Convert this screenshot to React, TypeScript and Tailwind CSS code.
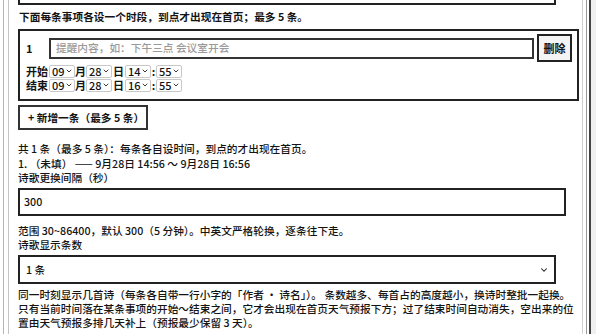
import React from "react";
import { ChevronDown } from "lucide-react";

const font = { fontFamily: '"Noto Sans CJK SC", "Noto Sans", sans-serif' };

const Sel = ({ v }: { v: string }) => (
  <span className="w-[26px] h-[13px] flex items-center justify-between border border-[#c8c8c8] rounded-[2px] pl-[2px] pr-[1px] text-[11px] leading-[11px] font-medium">
    {v}
    <ChevronDown size={8} strokeWidth={2.5} />
  </span>
);

const TimeRow = ({ label, h }: { label: string; h: string }) => (
  <div className="flex items-center h-[14px] leading-[11px]">
    <span className="w-[23px] font-bold">{label}</span>
    <Sel v="09" />
    <span className="w-[11px] text-center font-bold">月</span>
    <Sel v="28" />
    <span className="w-[13px] text-center font-bold">日</span>
    <Sel v={h} />
    <span className="w-[5px] text-center font-bold">:</span>
    <Sel v="55" />
  </div>
);

export default function App() {
  return (
    <div
      className="w-[596px] h-[334px] overflow-hidden bg-white text-[#141414] text-[10.7px] leading-[14px] flex"
      style={font}
    >
      {/* left frame lines */}
      <div className="w-[3px]" />
      <div className="w-[1px] bg-[#b5b5b5]" />
      <div className="w-[4px]" />
      <div className="w-[1px] bg-[#c4c4c4]" />

      {/* content */}
      <div className="w-[573px] pl-[9px] flex flex-col">
        <div className="w-[538px] h-[5px] border-2 border-t-0 border-[#222]" />

        <p className="mt-[3px] h-[17px] leading-[17px] pl-[1px] font-bold">
          下面每条事项各设一个时段，到点才出现在首页；最多 5 条。
        </p>

        {/* entry */}
        <div className="mt-[4px] w-[561px] h-[72px] border-2 border-[#222] pl-[6px] pr-[5px] pt-[3px]">
          <div className="flex items-center h-[28px]">
            <span className="w-[23px] font-bold text-[11px]">1</span>
            <div className="w-[486px] h-[21px] border-2 border-[#333] flex items-center px-[5px] text-[#9a9a9a] font-medium">
              提醒内容，如：下午三点 会议室开会
            </div>
            <button className="ml-[3px] w-[35px] h-[28px] border-2 border-[#222] bg-[#f4f4f4] font-bold text-[11px]">
              删除
            </button>
          </div>
          <div className="mt-[2px] text-[11px]">
            <TimeRow label="开始" h="14" />
            <TimeRow label="结束" h="16" />
          </div>
        </div>

        <button className="mt-[4px] w-[130px] h-[25px] border-2 border-[#333] font-bold text-[10.7px] text-left pl-[8px]">
          + 新增一条（最多 5 条）
        </button>

        <div className="mt-[12px] font-medium">
          <p>共 1 条（最多 5 条）：每条各自设时间，到点的才出现在首页。</p>
          <p className="mt-[1px]">1. （未填） —— 9月28日 14:56 ～ 9月28日 16:56</p>
          <p>诗歌更换间隔（秒）</p>
        </div>

        <div className="mt-[3px] w-[548px] h-[28px] border-2 border-[#222] flex items-center px-[4px] font-medium">
          300
        </div>

        <div className="mt-[8px] font-medium">
          <p>范围 30~86400，默认 300（5 分钟）。中英文严格轮换，逐条往下走。</p>
          <p>诗歌显示条数</p>
        </div>

        <div className="mt-[3px] w-[538px] h-[29px] border-2 border-[#222] flex items-center justify-between pl-[6px] pr-[5px] font-medium">
          <span>1 条</span>
          <ChevronDown size={10} strokeWidth={2.5} />
        </div>

        <div className="mt-[4px] font-medium w-[563px]">
          <p>
            同一时刻显示几首诗（每条各自带一行小字的「作者 · 诗名」）。 条数越多、每首占的高度越小，换诗时整批一起换。
          </p>
          <p>
            只有当前时间落在某条事项的开始～结束之间，它才会出现在首页天气预报下方；过了结束时间自动消失，空出来的位置由天气预报多排几天补上（预报最少保留 3 天）。
          </p>
        </div>
      </div>

      {/* right frame lines */}
      <div className="w-[1px] bg-[#d0d0d0]" />
      <div className="w-[3px]" />
      <div className="w-[1px] bg-[#9a9a9a]" />
      <div className="w-[2px]" />
      <div className="w-[2px] bg-[#444]" />
      <div className="flex-1 bg-[#f0f0f0]" />
    </div>
  );
}
